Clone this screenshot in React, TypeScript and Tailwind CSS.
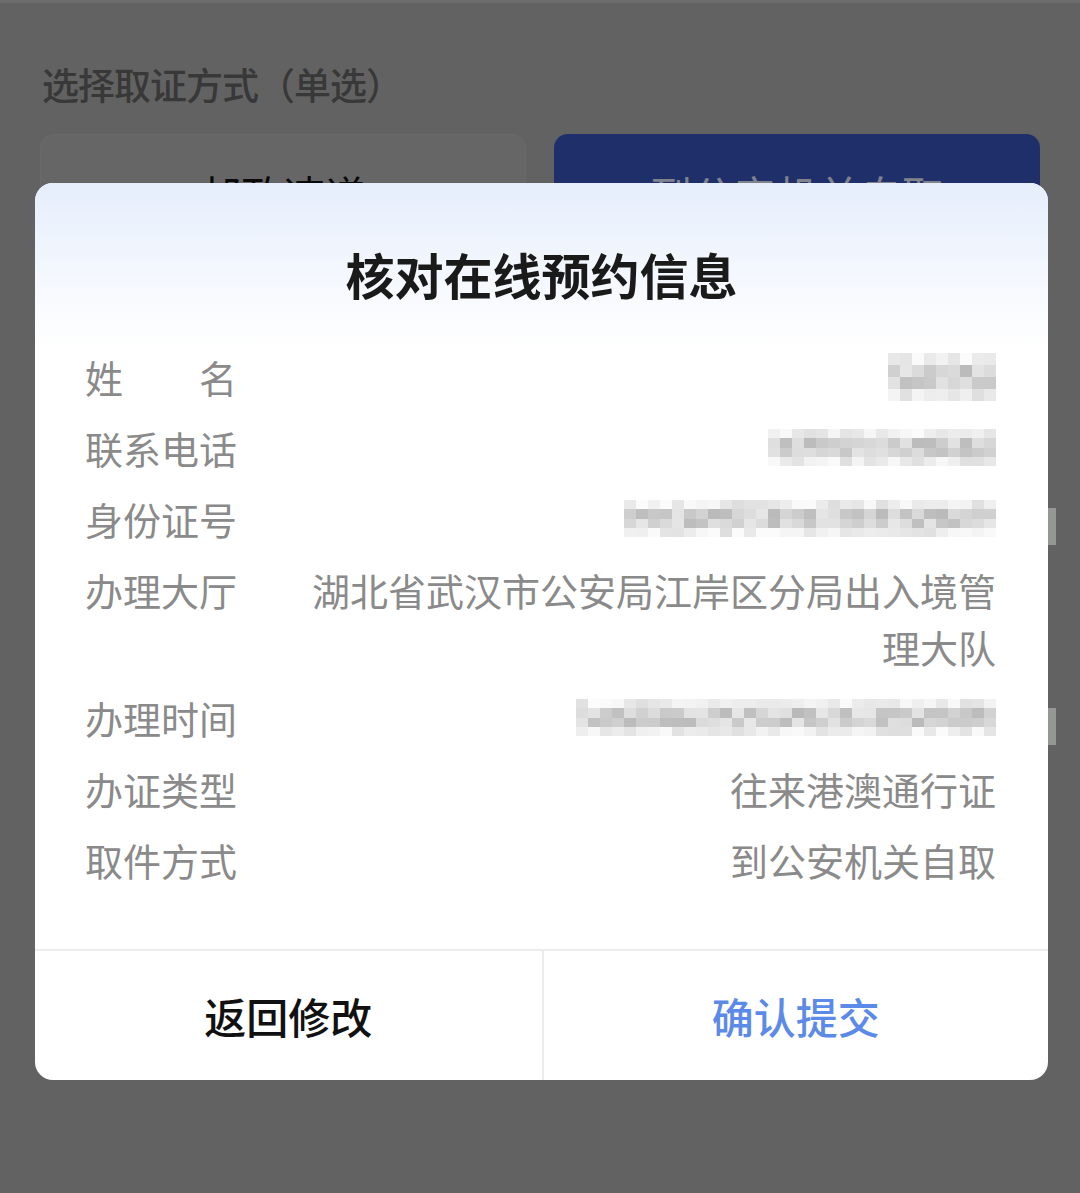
import React from "react";

type Row = { label: string; value?: string; mosaic?: { w: number; h: number; seed: number } };

const rows: Row[] = [
  { label: "姓名", mosaic: { w: 108, h: 48, seed: 3 } },
  { label: "联系电话", mosaic: { w: 228, h: 37, seed: 11 } },
  { label: "身份证号", mosaic: { w: 372, h: 37, seed: 29 } },
  { label: "办理大厅", value: "湖北省武汉市公安局江岸区分局出入境管理大队" },
  { label: "办理时间", mosaic: { w: 420, h: 37, seed: 47 } },
  { label: "办证类型", value: "往来港澳通行证" },
  { label: "取件方式", value: "到公安机关自取" },
];

function Mosaic({ w, h, seed }: { w: number; h: number; seed: number }) {
  const size = 12;
  const cols = Math.ceil(w / size);
  const lines = Math.ceil(h / size);
  let s = seed;
  const next = () => {
    s = (s * 9301 + 49297) % 233280;
    return s / 233280;
  };
  const cells = [];
  for (let r = 0; r < lines; r++) {
    for (let c = 0; c < cols; c++) {
      const edge = r === 0 || r === lines - 1;
      const base = edge ? 222 : 186;
      const v = Math.round(base + next() * (edge ? 30 : 46));
      cells.push(<div key={`${r}-${c}`} style={{ background: `rgb(${v},${v},${v})` }} />);
    }
  }
  return (
    <div
      className="grid"
      style={{ width: w, height: h, gridTemplateColumns: `repeat(${cols}, 1fr)`, gridTemplateRows: `repeat(${lines}, 1fr)` }}
    >
      {cells}
    </div>
  );
}

function InfoRow({ row }: { row: Row }) {
  return (
    <div className="flex items-start justify-between gap-[72px]">
      {row.label === "姓名" ? (
        <span className="flex w-[152px] shrink-0 justify-between">
          <span>姓</span>
          <span>名</span>
        </span>
      ) : (
        <span className="w-[152px] shrink-0">{row.label}</span>
      )}
      {row.mosaic ? (
        <div className="flex h-[57px] items-center">
          <Mosaic {...row.mosaic} />
        </div>
      ) : (
        <span className="text-right">{row.value}</span>
      )}
    </div>
  );
}

export default function App() {
  return (
    <div
      className="relative h-[1193px] w-[1080px] overflow-hidden bg-[#626262]"
      style={{ fontFamily: '"Noto Sans CJK SC", "Noto Sans", sans-serif' }}
    >
      <div className="h-[3px] bg-[#6c6c6c]" />

      {/* page behind the dialog */}
      <div className="px-[40px] pt-[58px]">
        <div className="pl-[2px] text-[37px] font-medium leading-[46px] tracking-[-1px] text-[#383838]">选择取证方式（单选）</div>
        <div className="mt-[27px] grid grid-cols-2 gap-[28px]">
          <div className="flex h-[118px] items-center justify-center rounded-[14px] border border-[#6a6a6a] bg-[#666666] text-[42px] text-[#0a0a0a]">
            邮政速递
          </div>
          <div className="flex h-[118px] items-center justify-center rounded-[14px] bg-[#1e2f6a] text-[42px] text-[#80838c]">
            到公安机关自取
          </div>
        </div>
      </div>

      {/* blurred bits poking out past the dialog edge */}
      <div className="absolute left-[1044px] top-[508px] h-[37px] w-[12px] bg-[#959795]" />
      <div className="absolute left-[1044px] top-[708px] h-[37px] w-[12px] bg-[#959795]" />

      {/* dialog */}
      <div className="absolute left-[35px] top-[183px] w-[1013px] overflow-hidden rounded-[18px] bg-white">
        <div className="h-[165px] bg-linear-to-b from-[#e6eefc] to-white pt-[62px] text-center text-[49px] font-bold leading-[58px] text-[#1a1a1a]">
          核对在线预约信息
        </div>
        <div className="flex flex-col gap-[14px] pl-[50px] pr-[52px] pb-[61px] text-[38px] leading-[57px] text-[#8a8a8a]">
          {rows.map((r) => (
            <InfoRow key={r.label} row={r} />
          ))}
        </div>
        <div className="grid h-[131px] grid-cols-2 border-t-2 border-[#ececec]">
          <button className="text-[42px] font-medium text-[#111]">返回修改</button>
          <button className="border-l-2 border-[#ececec] text-[42px] font-medium text-[#5b8ae8]">确认提交</button>
        </div>
      </div>
    </div>
  );
}
